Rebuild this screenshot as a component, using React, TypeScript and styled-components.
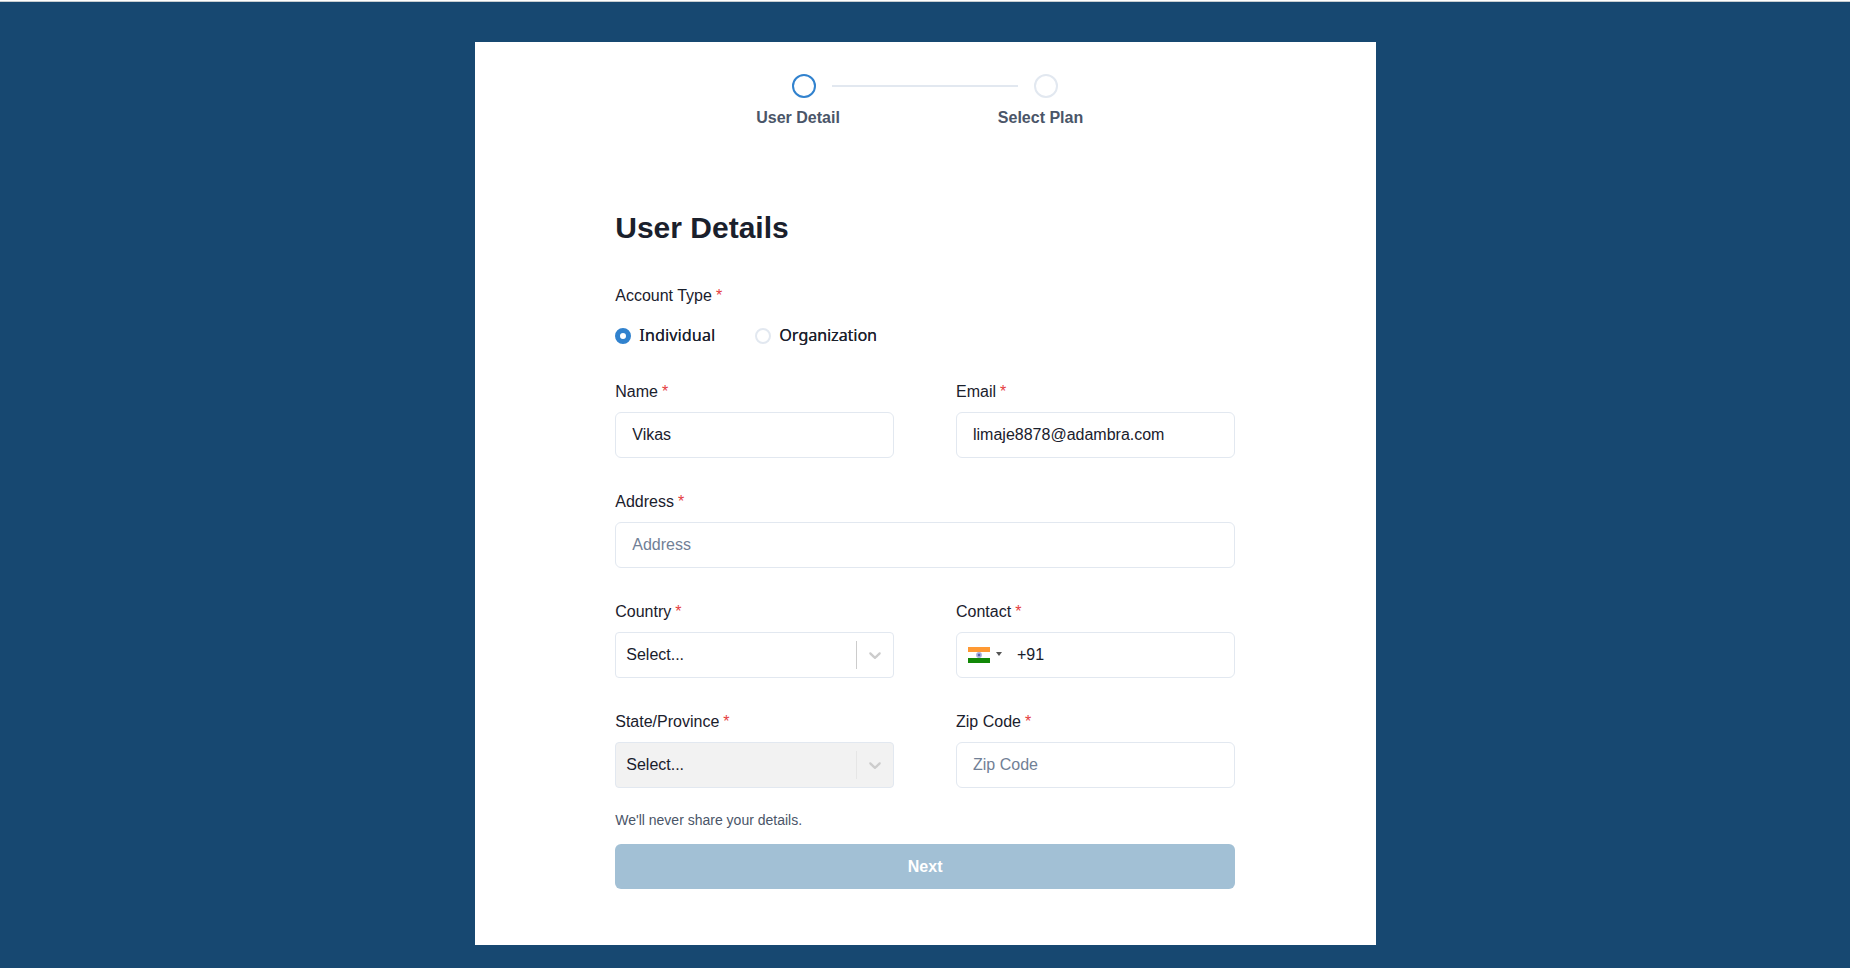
import React from 'react';
import styled, { createGlobalStyle, css } from 'styled-components';

const GlobalStyle = createGlobalStyle`
  *, *::before, *::after { box-sizing: border-box; }
  body {
    margin: 0;
    background: #174871;
    color: #1a202c;
    font: 16px/24px 'Liberation Sans', Arial, sans-serif;
  }
`;

const Page = styled.main`
  min-height: 968px;
  border-top: 1px solid #fff;
  padding: 41px 474px 22px 475px;
  background: #174871;
  box-shadow: inset 0 1px 0 #c8cdd0;
`;

const Card = styled.section`
  height: 903px;
  padding: 32px 141px 0 140.25px;
  background: #fff;
`;

const Stepper = styled.ol`
  display: flex;
  list-style: none;
  margin: 0;
  padding: 0 0 0 140px;
`;

const Step = styled.li`
  flex: none;
  width: 241.6px;
`;

const StepTrack = styled.div`
  display: flex;
  align-items: center;
  gap: 16px;
  padding-left: 37px;
`;

const StepDot = styled.span<{ $active?: boolean }>`
  flex: none;
  width: 24px;
  height: 24px;
  border: 2px solid ${(p) => (p.$active ? '#3182ce' : '#e2e8f0')};
  border-radius: 50%;
`;

const StepLine = styled.span`
  flex: none;
  width: 186px;
  height: 2px;
  background: #e2e8f0;
`;

const StepLabel = styled.div`
  margin-top: 8px;
  padding-left: 1px;
  color: #4a5568;
  font-weight: 700;
  line-height: 24px;
`;

const Title = styled.h1`
  margin: 80px 0 38px;
  font-size: 30px;
  line-height: 36px;
`;

const Form = styled.form`
  display: grid;
  grid-template-columns: 279px 279px;
  column-gap: 61.75px;
  row-gap: 32px;
`;

const Field = styled.div<{ $wide?: boolean }>`
  display: flex;
  flex-direction: column;
  gap: 8px;
  ${(p) => p.$wide && 'grid-column: 1 / -1;'}
`;

const Label = styled.label`
  display: block;
  height: 24px;
`;

const Star = styled.span`
  margin-left: 4px;
  color: #e53e3e;
`;

const controlBox = css`
  height: 46px;
  border: 1px solid #e2e8f0;
  background: #fff;
`;

const Input = styled.input`
  ${controlBox}
  width: 100%;
  padding: 0 16px;
  border-radius: 6px;
  color: inherit;
  font: inherit;
  outline: none;
  &::placeholder {
    color: #718096;
    opacity: 1;
  }
`;

const SelectBox = styled.div<{ $disabled?: boolean }>`
  ${controlBox}
  display: flex;
  align-items: center;
  padding: 0 8px 0 10px;
  border-radius: 4px;
  ${(p) => p.$disabled && 'background: #f2f2f2;'}
`;

const SelectValue = styled.span`
  flex: 1;
`;

const Divider = styled.span<{ $disabled?: boolean }>`
  width: 1px;
  height: 28px;
  margin-right: 8px;
  background: ${(p) => (p.$disabled ? '#e6e6e6' : '#cccccc')};
`;

const RadioRow = styled.div`
  display: flex;
  gap: 40px;
  margin-top: 8px;
`;

const Radio = styled.label<{ $width: number }>`
  display: flex;
  align-items: center;
  gap: 8px;
  width: ${(p) => p.$width}px;
  height: 24px;
`;

const RadioText = styled.span<{ $tracking: number }>`
  padding-bottom: 2px;
  font-family: 'Open Sans', sans-serif;
  font-feature-settings: 'ss01';
  font-weight: 500;
  font-size: 16px;
  letter-spacing: ${(p) => p.$tracking}px;
  text-shadow: 0.3px 0 0 currentColor;
  white-space: nowrap;
`;

const RadioDot = styled.span<{ $checked?: boolean }>`
  flex: none;
  width: 16px;
  height: 16px;
  border: ${(p) => (p.$checked ? '5px solid #3182ce' : '2px solid #e2e8f0')};
  border-radius: 50%;
`;

const PhoneBox = styled.div`
  ${controlBox}
  display: flex;
  align-items: center;
  padding-left: 11px;
  border-radius: 6px;
`;

const Caret = styled.span`
  margin: -2px 15px 0 6px;
  border: 3px solid transparent;
  border-top: 4px solid #555;
  border-bottom: 0;
`;

const Hint = styled.p`
  margin: 22px 0 13px;
  color: #4a5568;
  font-size: 14px;
  line-height: 21px;
`;

const NextButton = styled.button`
  width: 100%;
  height: 45px;
  padding: 0;
  border: 0;
  border-radius: 6px;
  background: #a2c0d5;
  color: #fff;
  font: 700 16px/24px 'Liberation Sans', Arial, sans-serif;
`;

const Chevron = () => (
  <svg width="20" height="20" viewBox="0 0 20 20" fill="#cccccc" aria-hidden="true">
    <path d="M4.516 7.548c0.436-0.446 1.043-0.481 1.576 0l3.908 3.747 3.908-3.747c0.533-0.481 1.141-0.446 1.574 0 0.436 0.445 0.408 1.197 0 1.615-0.406 0.418-4.695 4.502-4.695 4.502-0.217 0.223-0.502 0.335-0.787 0.335s-0.57-0.112-0.789-0.335c0 0-4.287-4.084-4.695-4.502s-0.436-1.17 0-1.615z" />
  </svg>
);

const Flag = () => (
  <svg width="22" height="16" viewBox="0 0 22 16" aria-hidden="true">
    <path fill="#ff9933" d="M0 0h22v5H0z" />
    <path fill="#fff" d="M0 5h22v6H0z" />
    <path fill="#128807" d="M0 11h22v5H0z" />
    <circle cx="11" cy="8" r="2.9" fill="#a9aedb" />
    <circle cx="11" cy="8" r="1.3" fill="#5960ae" />
  </svg>
);

const Caption = ({ children }: { children: React.ReactNode }) => (
  <Label>
    {children}
    <Star>*</Star>
  </Label>
);

const Select = ({ label, disabled }: { label: string; disabled?: boolean }) => (
  <Field>
    <Caption>{label}</Caption>
    <SelectBox $disabled={disabled}>
      <SelectValue>Select...</SelectValue>
      <Divider $disabled={disabled} />
      <Chevron />
    </SelectBox>
  </Field>
);

export default function App() {
  return (
    <>
      <GlobalStyle />
      <Page>
        <Card>
          <Stepper>
            <Step>
              <StepTrack>
                <StepDot $active />
                <StepLine />
              </StepTrack>
              <StepLabel>User Detail</StepLabel>
            </Step>
            <Step>
              <StepTrack>
                <StepDot />
              </StepTrack>
              <StepLabel>Select Plan</StepLabel>
            </Step>
          </Stepper>
          <Title>User Details</Title>
          <Form>
            <Field $wide>
              <Caption>Account Type</Caption>
              <RadioRow>
                <Radio $width={100}>
                  <RadioDot $checked />
                  <RadioText $tracking={0.25}>Individual</RadioText>
                </Radio>
                <Radio $width={124}>
                  <RadioDot />
                  <RadioText $tracking={0.05}>Organization</RadioText>
                </Radio>
              </RadioRow>
            </Field>
            <Field>
              <Caption>Name</Caption>
              <Input defaultValue="Vikas" />
            </Field>
            <Field>
              <Caption>Email</Caption>
              <Input defaultValue="limaje8878@adambra.com" />
            </Field>
            <Field $wide>
              <Caption>Address</Caption>
              <Input placeholder="Address" />
            </Field>
            <Select label="Country" />
            <Field>
              <Caption>Contact</Caption>
              <PhoneBox>
                <Flag />
                <Caret />
                <span>+91</span>
              </PhoneBox>
            </Field>
            <Select label="State/Province" disabled />
            <Field>
              <Caption>Zip Code</Caption>
              <Input placeholder="Zip Code" />
            </Field>
          </Form>
          <Hint>We'll never share your details.</Hint>
          <NextButton type="button">Next</NextButton>
        </Card>
      </Page>
    </>
  );
}
